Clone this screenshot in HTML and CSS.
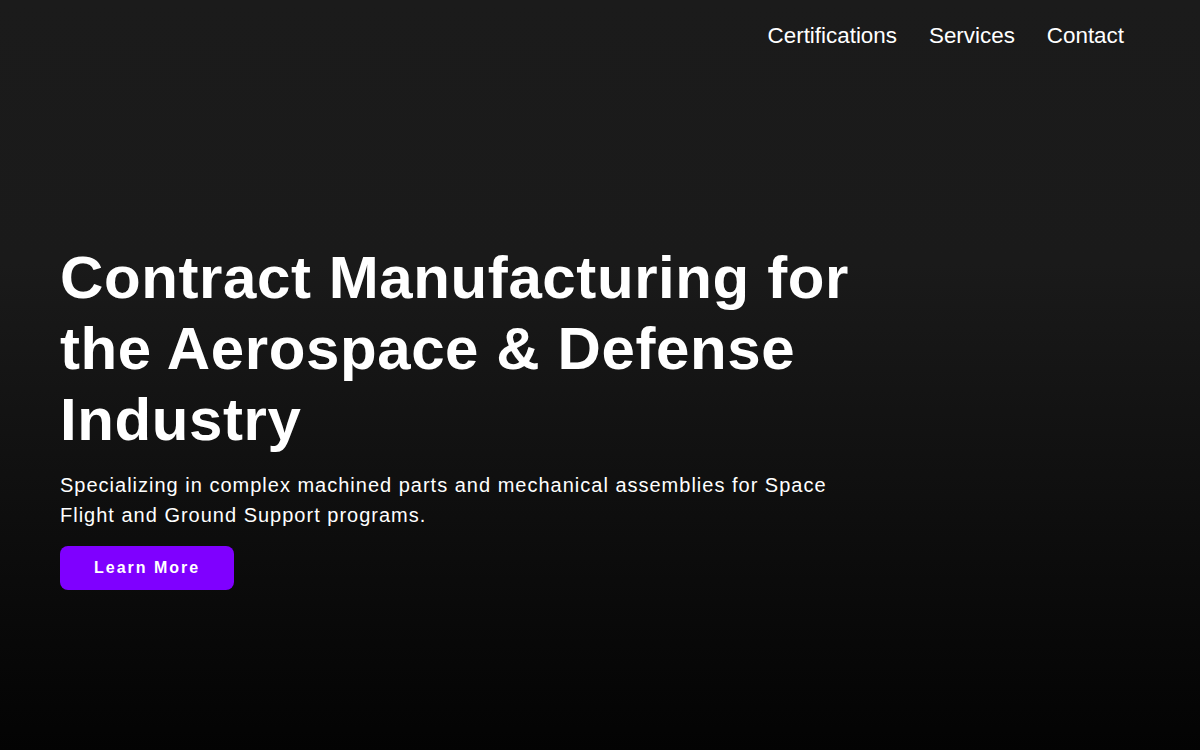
FILE: index.html
```html
<!DOCTYPE html>
<html lang="en">
<head>
  <meta charset="UTF-8" />
  <meta name="viewport" content="width=device-width, initial-scale=1.0"/>
  <title>Contract Manufacturing for the Aerospace &amp; Defense Industry</title>
  <link rel="stylesheet" href="styles.css">
</head>
<body>
  <header class="site-header">
    <nav class="main-nav">
      <a href="#certifications">Certifications</a>
      <a href="#services">Services</a>
      <a href="#contact">Contact</a>
    </nav>
  </header>

  <section class="hero">
    <div class="hero-content">
      <h1 class="hero-title">Contract Manufacturing for the Aerospace &amp; Defense Industry</h1>
      <p class="hero-text">Specializing in complex machined parts and mechanical assemblies for Space Flight and Ground Support programs.</p>
      <a href="#services" class="btn">Learn More</a>
    </div>
  </section>
</body>
</html>
```

FILE: styles.css
```css
html, body {
  height: 100%;
}
body {
  font-family: "Liberation Sans", Arial, sans-serif;
  margin: 0;
  padding: 0;
  color: #fff;
  background: linear-gradient(to bottom, #1b1b1b 0%, #1a1a1a 35%, #030303 100%);
  display: flex;
  flex-direction: column;
  min-height: 750px;
}
.site-header {
  height: 72px;
  display: flex;
  justify-content: flex-end;
  align-items: center;
  padding: 0 76px;
}
.main-nav {
  display: flex;
  gap: 32px;
}
.main-nav a {
  color: #fff;
  text-decoration: none;
  font-size: 22.4px;
}
.hero {
  flex: 1;
  display: flex;
  align-items: center;
  padding: 9px 60px 0 60px;
}
.hero-content {
  max-width: 800px;
}
.hero-title {
  font-size: 60px;
  line-height: 71px;
  letter-spacing: 0.6px;
  font-weight: bold;
  margin: 0 0 15px 0;
}
.hero-text {
  font-size: 20px;
  line-height: 30px;
  letter-spacing: 1px;
  margin: 0 0 16px 0;
}
.btn {
  display: inline-block;
  background: #7f00ff;
  color: #fff;
  text-decoration: none;
  font-weight: bold;
  font-size: 16px;
  letter-spacing: 2px;
  padding: 13px 34px;
  border-radius: 8px;
}
```
